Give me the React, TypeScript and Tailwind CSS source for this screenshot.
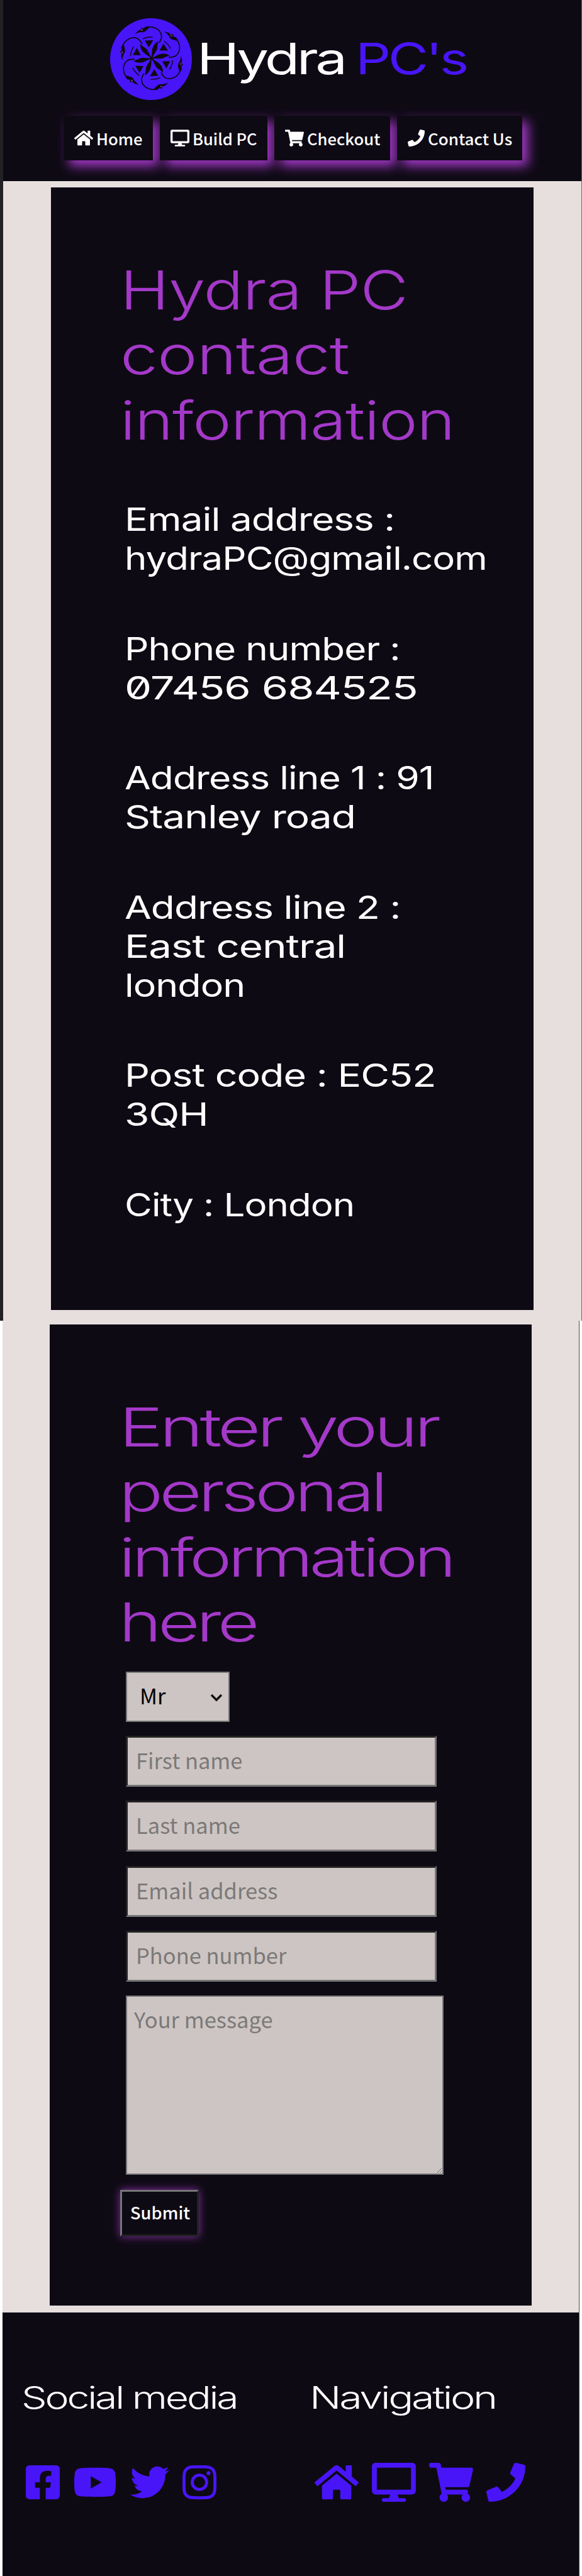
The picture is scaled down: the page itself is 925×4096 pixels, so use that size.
import { useLayoutEffect, useRef, useState } from "react";
import type { ReactNode } from "react";
import {
  FaDesktop,
  FaFacebookSquare,
  FaHome,
  FaInstagram,
  FaPhone,
  FaShoppingCart,
  FaTwitter,
  FaYoutube,
} from "react-icons/fa";

/** One line of display type, stretched to a fixed measure. */
function Line({ w, children }: { w: number; children: ReactNode }) {
  const ref = useRef<HTMLSpanElement>(null);
  const [scale, setScale] = useState(1);
  useLayoutEffect(() => {
    if (ref.current) setScale(w / ref.current.offsetWidth);
  }, [w]);
  return (
    <span className="block" style={{ width: w }}>
      <span
        ref={ref}
        className="inline-block origin-left whitespace-nowrap align-top"
        style={{ transform: `scaleX(${scale})` }}
      >
        {children}
      </span>
    </span>
  );
}

function Logo() {
  return (
    <svg viewBox="-228 -220 450 450" className="size-[130px] shrink-0">
      <circle cx="-3" cy="5" r="225" fill="#4815f8" />
      {[0, 60, 120, 180, 240, 300].map((a) => (
        <g key={a} transform={`rotate(${a})`}>
          <path
            d="M-92 -133 L-74 -152 L-62 -154 L-56 -168 L-42 -164 L-34 -174 L-10 -171 Q-22 -160 -30 -152 Q-42 -140 -58 -144 Q-74 -142 -92 -133Z"
            fill="#0e0a14"
          />
          <path
            d="M-30 -171 C10 -178 50 -160 55 -122 C56 -108 50 -98 42 -84"
            fill="none"
            stroke="#0e0a14"
            strokeWidth="6"
          />
          <path d="M37 -94 Q4 -76 2 -36 L0 4 Q10 -16 22 -34 Q34 -50 32 -68Z" fill="#0e0a14" />
          <path d="M-37 -97 L9 -99 L-15 -60Z" fill="#0e0a14" />
          <path d="M-48 -106 Q-25 -118 6 -117" fill="none" stroke="#0e0a14" strokeWidth="5" />
          <circle cx="-53" cy="-156" r="5" fill="#7d2f78" />
        </g>
      ))}
      <circle r="9" fill="#0e0a14" />
    </svg>
  );
}

const navItems = [
  { label: "Home", Icon: FaHome, box: "w-[142px]", icon: "w-[30px]", text: 74 },
  { label: "Build PC", Icon: FaDesktop, box: "w-[171px]", icon: "w-[30px]", text: 103 },
  { label: "Checkout", Icon: FaShoppingCart, box: "w-[184px]", icon: "w-[30px]", text: 116 },
  { label: "Contact Us", Icon: FaPhone, box: "w-[199px]", icon: "w-[27px]", text: 134 },
];

const details: [string, number][][] = [
  [["Email address :", 429], ["hydraPC@gmail.com", 576]],
  [["Phone number :", 438], ["07456 684525", 466]],
  [["Address line 1 : 91", 492], ["Stanley road", 367]],
  [["Address line 2 :", 438], ["East central", 351], ["london", 191]],
  [["Post code : EC52", 495], ["3QH", 133]],
  [["City : London", 365]],
];

const field =
  "block h-[81px] w-[494px] border-[3px] border-t-[#222] border-l-[#222] border-r-[#767676] border-b-[#767676] bg-[#cdc5c3] px-[13px] pb-[5px] text-[34.5px] text-black placeholder:text-[#7b7978] outline-none";

export default function App() {
  return (
    <div className="flex h-[4096px] w-[925px] flex-col overflow-hidden bg-white font-['Noto_Sans_CJK_SC','Noto_Sans',sans-serif]">
      <div className="flex h-[2100px] border-l-[5px] border-r border-l-[#222224] border-r-[#6b6768] bg-[#e7dfdd]">
        <div className="flex w-full flex-col">
          <header className="h-[288px] bg-[#0e0a14] pt-[29px]">
            <div className="flex items-center gap-[8px] pl-[170px] font-['Inter',sans-serif] text-[69px] leading-[69px] font-normal tracking-tighter text-white">
              <Logo />
              <h1 className="flex gap-[17px] pb-[2px]">
                <Line w={235}>Hydra</Line>
                <span className="text-[#4815f8]">
                  <Line w={176}>PC's</Line>
                </span>
              </h1>
            </div>
            <nav className="mt-[25px] flex gap-[11px] pl-[96px]">
              {navItems.map(({ label, Icon, box, icon, text }) => (
                <a
                  key={label}
                  className={`${box} flex h-[71px] items-center gap-[5px] bg-[#0e0a14] pl-[17px] text-[25px] leading-[36px] font-medium text-white shadow-[9px_9px_17px_#a439c9]`}
                >
                  <Icon className={`h-[27px] ${icon} shrink-0`} />
                  <Line w={text}>{label}</Line>
                </a>
              ))}
            </nav>
          </header>

          <section className="mt-[10px] ml-[76px] h-[1785px] w-[767px] bg-[#0e0a14] pt-[112px] font-['Inter',sans-serif] tracking-tighter">
            <h2 className="pl-[110px] text-[85px] leading-[103.4px] font-[350] text-[#a439c9]">
              <Line w={457}>Hydra PC</Line>
              <Line w={364}>contact</Line>
              <Line w={532}>information</Line>
            </h2>
            <ul className="mt-[74px] flex flex-col gap-[81.5px] pl-[117px] text-[51.3px] leading-[62px] font-normal text-white slashed-zero">
              {details.map((lines) => (
                <li key={lines[0][0]}>
                  {lines.map(([t, w]) => (
                    <Line key={t} w={w}>
                      {t}
                    </Line>
                  ))}
                </li>
              ))}
            </ul>
          </section>
        </div>
      </div>

      <div className="mr-[4px] ml-[4px] flex h-[1996px] flex-col border-r border-[#4f4c4e] bg-[#e7dfdd]">
        <section className="mt-[6px] ml-[75px] h-[1560px] w-[766px] bg-[#0e0a14] pt-[112px]">
          <h2 className="pl-[110px] font-['Inter',sans-serif] text-[85px] leading-[103.4px] font-[350] tracking-tighter text-[#a439c9]">
            <Line w={506}>Enter your</Line>
            <Line w={422}>personal</Line>
            <Line w={531}>information</Line>
            <Line w={218}>here</Line>
          </h2>
          <form className="flex flex-col pl-[121px]">
            <div className="mt-[26px] flex h-[80px] w-[165px] items-center justify-between border-2 border-[#767676] bg-[#cdc5c3] pr-[9px] pb-[3px] pl-[20px] text-[34.5px] text-black">
              <span>Mr</span>
              <svg viewBox="0 0 20 13" className="mt-[6px] h-[13px] w-[20px]" fill="none">
                <path d="M2 2 L10 10 L18 2" stroke="#111" strokeWidth="3.4" />
              </svg>
            </div>
            <div className="mt-[22px] flex flex-col gap-[22.6px]">
              <input className={field} placeholder="First name" />
              <input className={field} placeholder="Last name" />
              <input className={field} placeholder="Email address" />
              <input className={field} placeholder="Phone number" />
            </div>
            <textarea
              className="mt-[22px] block h-[285px] w-[505px] border-2 border-[#767676] bg-[#cdc5c3] px-[11px] pt-[11px] text-[34.5px] leading-[49px] outline-none placeholder:text-[#7b7978]"
              placeholder="Your message"
            />
            <button
              type="button"
              className="mt-[24px] -ml-[9px] h-[74px] w-[125px] border-[3px] border-t-[#767676] border-r-[#222] border-b-[#222] border-l-[#767676] bg-[#0e0a14] pb-[2px] pl-[13px] text-[27px] font-medium text-white shadow-[0_0_13px_#8a30aa]"
            >
              <Line w={95}>Submit</Line>
            </button>
          </form>
        </section>

        <footer className="mt-[11px] flex h-[419px] bg-[#0e0a14] pt-[105px]">
          <div className="w-[458px] pl-[30px]">
            <h3 className="font-['Inter',sans-serif] text-[49px] leading-[62px] font-[350] tracking-tighter text-white">
              <Line w={343}>Social media</Line>
            </h3>
            <div className="mt-[72px] flex gap-[21px] pl-[7px] text-[#4815f8]">
              <FaFacebookSquare className="h-[62px] w-[54px]" />
              <FaYoutube className="h-[62px] w-[70px]" />
              <FaTwitter className="h-[62px] w-[62px]" />
              <FaInstagram className="h-[62px] w-[54px]" />
            </div>
          </div>
          <div className="pl-[30px]">
            <h3 className="font-['Inter',sans-serif] text-[49px] leading-[62px] font-[350] tracking-tighter text-white">
              <Line w={296}>Navigation</Line>
            </h3>
            <div className="mt-[72px] flex gap-[21px] pl-[8px] text-[#4815f8]">
              <FaHome className="h-[62px] w-[70px]" />
              <FaDesktop className="h-[62px] w-[70px]" />
              <FaShoppingCart className="h-[62px] w-[70px]" />
              <FaPhone className="h-[62px] w-[62px]" />
            </div>
          </div>
        </footer>
      </div>
    </div>
  );
}
